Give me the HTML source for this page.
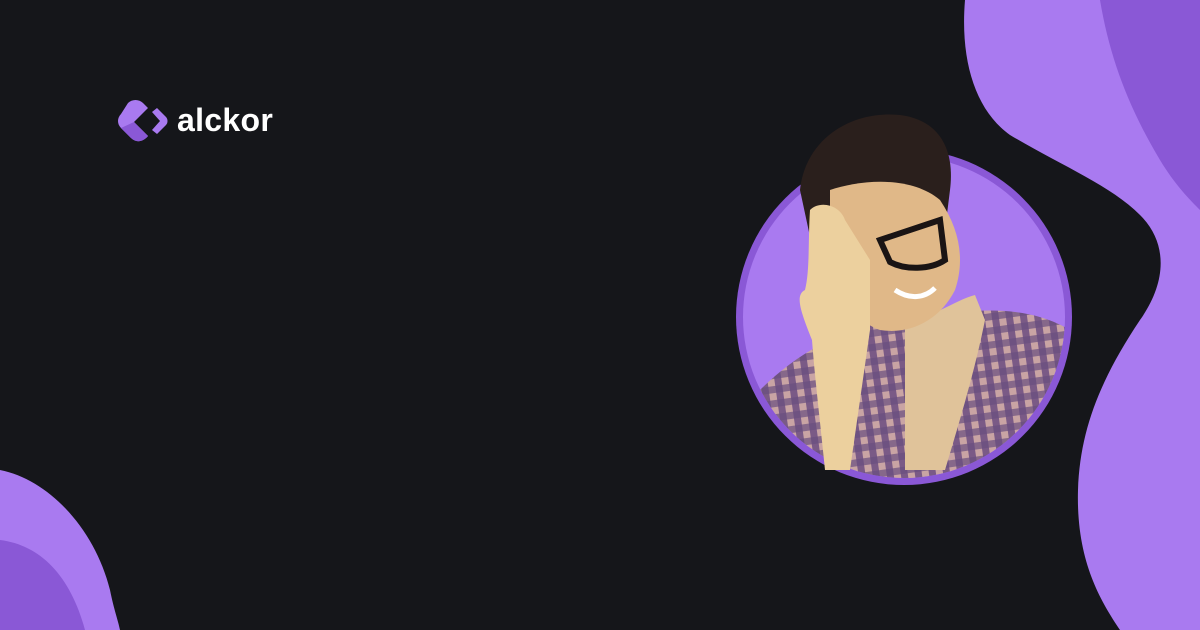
<!DOCTYPE html>
<html><head><style>
html,body{margin:0;padding:0;background:#15161a;}
.wrap{position:relative;width:1200px;height:630px;overflow:hidden;background:#15161a;font-family:"Liberation Sans",sans-serif;}
.logo{position:absolute;left:177px;top:102px;color:#fff;font-weight:bold;font-size:32px;letter-spacing:0.3px;}
</style></head><body><div class="wrap">
<svg width="1200" height="630" style="position:absolute;left:0;top:0">
<defs>
<pattern id="chk" width="14" height="14" patternUnits="userSpaceOnUse" patternTransform="rotate(-8)">
<rect width="14" height="14" fill="#c9a4a4"/>
<rect width="7" height="14" fill="#7a5a86"/>
<rect width="14" height="7" fill="#6a4f7f" opacity="0.7"/>
</pattern>
</defs>
<path d="M965,0 C960,60 975,110 1010,135 C1060,165 1110,185 1140,215 C1170,245 1165,285 1140,320 C1100,380 1080,430 1078,490 C1076,560 1100,600 1120,630 L1200,630 L1200,0 Z" fill="#a97af0"/>
<path d="M1100,0 C1110,60 1130,110 1160,160 C1175,185 1190,200 1200,210 L1200,0 Z" fill="#8a58d6"/>
<path d="M0,470 C50,480 95,530 110,590 C114,610 118,620 120,630 L0,630 Z" fill="#a97af0"/>
<path d="M0,540 C40,545 70,575 85,630 L0,630 Z" fill="#8a58d6"/>
<!-- logo -->
<path d="M128,103 C132,99 139,99 143,103 L148,108 L134,122 L148,136 C143,142 136,143 131,138 L121,128 C117,124 117,118 121,114 Z" fill="#a97af0"/>
<path d="M134,122 L148,136 C143,142 136,143 131,138 L121,128 Z" fill="#8a58d6"/>
<path d="M152,112 L157,108 L166,117 C168,119 168,123 166,125 L157,134 L152,130 L160,121 Z" fill="#a97af0"/>
<!-- circle -->
<clipPath id="c"><circle cx="904" cy="317" r="161"/></clipPath>
<circle cx="904" cy="317" r="168" fill="#8a58d6"/>
<circle cx="904" cy="317" r="161" fill="#a97af0"/>
<g clip-path="url(#c)">
<path d="M760,390 C800,350 850,325 900,318 C960,312 1020,300 1070,330 L1070,490 L760,490 Z" fill="url(#chk)"/>
<path d="M905,320 C930,320 955,300 975,295 L985,320 C975,370 960,420 945,470 L905,470 Z" fill="#e0c39a"/>
</g>
<path d="M800,190 C805,140 850,110 900,115 C940,120 955,150 950,190 L945,230 L940,260 L815,260 Z" fill="#2a1f1c"/>
<path d="M830,190 C860,180 910,175 940,200 C960,230 965,260 955,290 C940,320 910,335 880,330 C850,320 830,280 830,240 Z" fill="#e0b888"/>
<path d="M810,210 C820,200 840,205 845,220 L870,260 L870,330 L850,470 L825,470 C820,420 815,380 812,340 C800,310 795,295 805,290 C810,270 808,240 810,210 Z" fill="#ecd09e"/>
<path d="M880,240 L940,220 L945,260 C930,270 905,270 890,262 Z" fill="none" stroke="#1a1414" stroke-width="6"/>
<path d="M895,290 C910,300 925,298 935,288" fill="none" stroke="#fff" stroke-width="5"/>
</svg>
<div class="logo">alckor</div>
</div></body></html>
